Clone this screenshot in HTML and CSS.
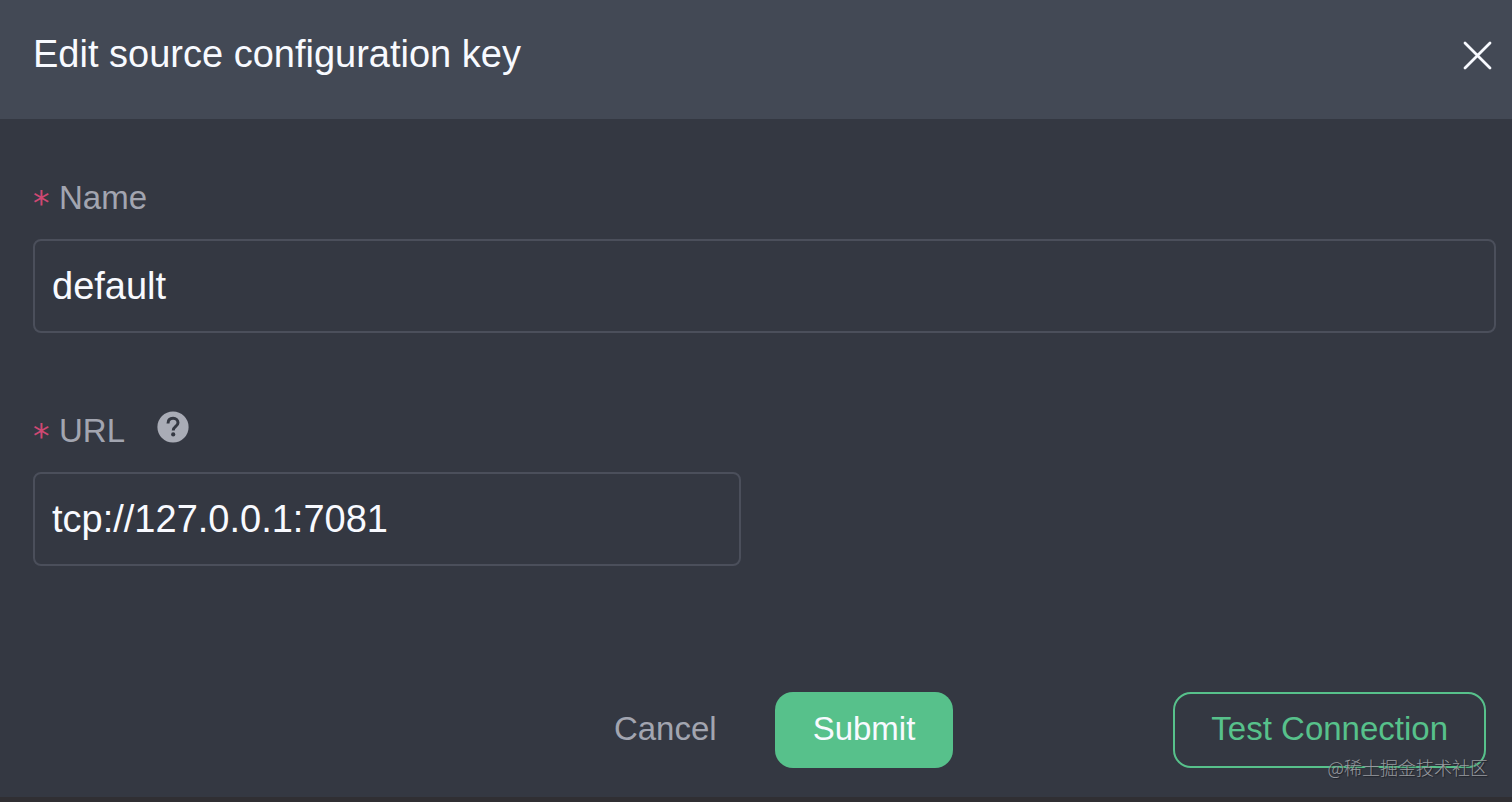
FILE: index.html
```html
<!DOCTYPE html>
<html lang="en">
<head>
<meta charset="utf-8">
<meta name="viewport" content="width=device-width, initial-scale=1">
<title>Edit source configuration key</title>
<link rel="stylesheet" href="styles.css">
</head>
<body>
<main class="dialog">
  <header class="dialog-header">
    <h1 class="dialog-title">Edit source configuration key</h1>
    <button class="close" type="button" aria-label="Close">
      <svg class="close-icon" viewBox="0 0 30 30" aria-hidden="true"><path d="M3 3 28 28M28 3 3 28"/></svg>
    </button>
  </header>
  <form class="dialog-form">
    <div class="field">
      <div class="field-head">
        <span class="required">*</span>
        <label class="label" for="name">Name</label>
      </div>
      <input class="input" id="name" type="text" value="default" required>
    </div>
    <div class="field field-half">
      <div class="field-head">
        <span class="required">*</span>
        <label class="label" for="url">URL</label>
        <button class="help" type="button" aria-label="Help">
          <svg class="help-icon" viewBox="0 0 32 32" aria-hidden="true">
            <circle class="help-disc" cx="16" cy="16" r="15.6"/>
            <path class="help-hook" d="M11 12.4C11 9 13.2 7.3 16.1 7.3S21 9.1 21 11.8C21 15.4 16.2 15.6 16.2 19.6"/>
            <circle class="help-dot" cx="16.2" cy="23.4" r="2.1"/>
          </svg>
        </button>
      </div>
      <input class="input" id="url" type="text" value="tcp://127.0.0.1:7081" required>
    </div>
    <footer class="actions">
      <button class="button button-text" type="button">Cancel</button>
      <button class="button button-primary" type="submit">Submit</button>
      <button class="button button-outline" type="button">Test Connection</button>
    </footer>
  </form>
  <span class="watermark" lang="zh-CN">@稀土掘金技术社区</span>
</main>
</body>
</html>
```
FILE: styles.css
```css
* {
  box-sizing: border-box;
}

body {
  margin: 0;
  background: #343842;
  color: #f8faff;
  font-family: "Liberation Sans", Arial, sans-serif;
}

button,
input {
  margin: 0;
  font-family: inherit;
}

.dialog {
  position: relative;
  display: flex;
  flex-direction: column;
  min-height: 100vh;
  border-bottom: 5px solid #302f33;
}

.dialog-header {
  display: flex;
  align-items: flex-start;
  justify-content: space-between;
  padding: 32px 20px 43px 33px;
  background: #434955;
}

.dialog-title {
  margin: 0;
  font-size: 38px;
  font-weight: 400;
  line-height: 44px;
}

.close,
.help {
  display: flex;
  padding: 0;
  border: 0;
  background: none;
  cursor: pointer;
}

.close {
  padding-top: 8px;
}

.close-icon {
  width: 30px;
  height: 30px;
  fill: none;
  stroke: #f8faff;
  stroke-width: 2.8;
  stroke-linecap: round;
}

.dialog-form {
  display: flex;
  flex: 1;
  flex-direction: column;
  padding: 55px 16px 29px 33px;
}

.field {
  display: flex;
  flex-direction: column;
  gap: 17px;
  margin-bottom: 74px;
}

.field-half {
  width: 708px;
  max-width: 100%;
}

.field-head {
  display: flex;
  align-items: center;
  height: 48px;
}

.required {
  width: 26px;
  padding-top: 12px;
  color: #cf4873;
  font-family: "DejaVu Sans", sans-serif;
  font-size: 33px;
  line-height: 40px;
}

.label {
  color: #a2a5b0;
  font-size: 33px;
  line-height: 48px;
}

.help {
  align-self: flex-start;
  padding: 4px 0 0 32px;
}

.help-icon {
  width: 32px;
  height: 32px;
}

.help-disc {
  fill: #a9acb6;
}

.help-hook {
  fill: none;
  stroke: #343842;
  stroke-width: 3;
}

.help-dot {
  fill: #343842;
}

.input {
  width: 100%;
  height: 94px;
  padding: 0 17px;
  border: 2px solid #4b4f5b;
  border-radius: 8px;
  outline: 0;
  background: transparent;
  color: #f8faff;
  font-size: 38px;
}

.actions {
  display: flex;
  justify-content: flex-end;
  margin-top: auto;
  padding-right: 10px;
}

.button {
  height: 76px;
  padding: 0 36px 2px;
  border: 2px solid transparent;
  border-radius: 18px;
  background: none;
  font-size: 33px;
  cursor: pointer;
}

.button-text {
  margin-right: 20px;
  color: #a2a5b0;
}

.button-primary {
  margin-right: 220px;
  background: #57c18b;
  color: #f8faff;
}

.button-outline {
  border-color: #57c18b;
  color: #57c18b;
}

.watermark {
  position: absolute;
  right: 24px;
  bottom: 18px;
  color: #979a9f;
  font-family: "Noto Sans CJK SC", sans-serif;
  font-size: 18px;
  font-weight: 300;
  line-height: 24px;
  text-shadow: 1px 1px 1px #202329;
}
```
